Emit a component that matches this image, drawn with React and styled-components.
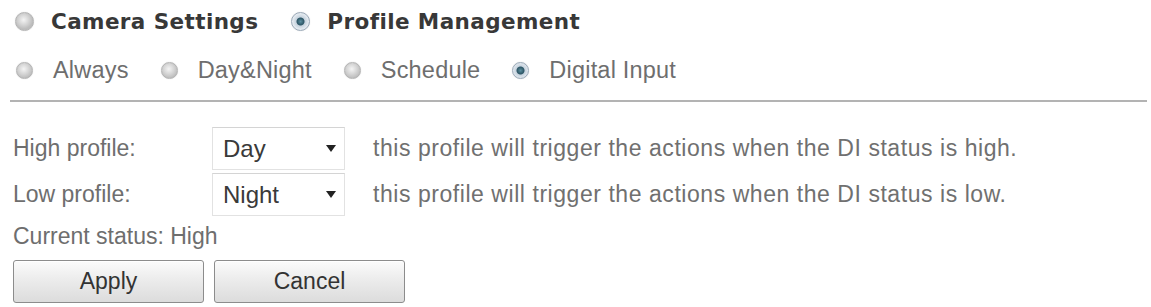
import React from 'react'
import { styled, createGlobalStyle } from 'styled-components'

const Global = createGlobalStyle`
  html, body {
    margin: 0;
    padding: 0;
    background: #ffffff;
  }
  body {
    font-family: "Liberation Sans", Arial, sans-serif;
  }
`

const Page = styled.div`
  width: 1151px;
  height: 307px;
  overflow: hidden;
  padding: 0 4px 0 12px;
  box-sizing: border-box;
`

const TabRow = styled.div`
  display: flex;
  align-items: center;
  height: 42px;
  padding-left: 3px;
`

const ModeRow = styled.div`
  display: flex;
  align-items: center;
  height: 44px;
  margin-top: 6px;
  padding-left: 4px;
`

const Option = styled.label`
  display: flex;
  align-items: center;
  gap: ${(p) => (p.$big ? '17px' : '20px')};
  margin-right: ${(p) => (p.$big ? '33px' : '32px')};
  font-family: ${(p) => (p.$big ? '"DejaVu Sans", Verdana, sans-serif' : '"Liberation Sans", Arial, sans-serif')};
  font-weight: ${(p) => (p.$big ? 'bold' : 'normal')};
  font-size: ${(p) => (p.$big ? '21.5px' : '23.5px')};
  letter-spacing: ${(p) => (p.$big ? '0.4px' : '0.2px')};
  color: ${(p) => (p.$big ? '#383838' : '#6e6e6e')};
`

const Radio = styled.span`
  width: ${(p) => (p.$big ? '19px' : '17px')};
  height: ${(p) => (p.$big ? '19px' : '17px')};
  border-radius: 50%;
  box-sizing: border-box;
  flex: none;
  border: 1px solid ${(p) => (p.$on ? '#9aa9b8' : '#b4b4b4')};
  background: ${(p) =>
    p.$on
      ? 'radial-gradient(circle at 50% 50%, #5c8fa0 0, #2d5666 3.5px, #c7d3de 4.5px, #eef2f6 9px)'
      : 'radial-gradient(circle at 45% 40%, #f4f4f4 0, #d6d6d6 5px, #bdbdbd 9px)'};
  box-shadow: 0 0 1px #c8c8c8;
`

const Divider = styled.div`
  height: 0;
  border-top: 2px solid #b3b3b3;
  margin: 8px 0 0 -2px;
`

const Form = styled.div`
  display: flex;
  flex-direction: column;
  padding-top: 25px;
  padding-left: 1px;
`

const FieldRow = styled.div`
  display: flex;
  align-items: center;
  height: 43px;
  margin-bottom: 3px;
`

const Label = styled.span`
  width: 199px;
  font-size: 23px;
  color: #6e6e6e;
  flex: none;
`

const Select = styled.div`
  width: 133px;
  height: 43px;
  box-sizing: border-box;
  border: 1px solid #e2e2e2;
  border-top-color: #d4d4d4;
  display: flex;
  align-items: center;
  justify-content: space-between;
  padding: 0 8px 0 10px;
  font-size: 24px;
  color: #3a3a3a;
  flex: none;
`

const Arrow = styled.span`
  width: 0;
  height: 0;
  border-left: 5.5px solid transparent;
  border-right: 5.5px solid transparent;
  border-top: 7px solid #222;
`

const Hint = styled.span`
  margin-left: 28px;
  font-size: 23px;
  letter-spacing: 0.55px;
  color: #707070;
  white-space: nowrap;
`

const Status = styled.div`
  font-size: 23px;
  color: #6e6e6e;
  height: 32px;
  display: flex;
  align-items: center;
  margin-top: 1px;
`

const Buttons = styled.div`
  display: flex;
  gap: 10px;
  margin-top: 8px;
`

const Button = styled.button`
  width: 191px;
  height: 43px;
  border: 1px solid #8c8c8c;
  border-radius: 3px;
  background: linear-gradient(#fbfbfb, #ececec 45%, #dcdcdc);
  box-shadow: inset 0 1px 0 #ffffff;
  font-family: "Liberation Sans", Arial, sans-serif;
  font-size: 23px;
  color: #333;
  padding: 0;
`

const App = () => {
  return (
    <>
      <Global />
      <Page>
        <TabRow>
          <Option $big>
            <Radio $big />
            Camera Settings
          </Option>
          <Option $big>
            <Radio $big $on />
            Profile Management
          </Option>
        </TabRow>

        <ModeRow>
          <Option>
            <Radio />
            Always
          </Option>
          <Option>
            <Radio />
            Day&amp;Night
          </Option>
          <Option>
            <Radio />
            Schedule
          </Option>
          <Option>
            <Radio $on />
            Digital Input
          </Option>
        </ModeRow>

        <Divider />

        <Form>
          <FieldRow>
            <Label>High profile:</Label>
            <Select>
              Day
              <Arrow />
            </Select>
            <Hint>this profile will trigger the actions when the DI status is high.</Hint>
          </FieldRow>
          <FieldRow>
            <Label>Low profile:</Label>
            <Select>
              Night
              <Arrow />
            </Select>
            <Hint>this profile will trigger the actions when the DI status is low.</Hint>
          </FieldRow>
          <Status>Current status: High</Status>
          <Buttons>
            <Button>Apply</Button>
            <Button>Cancel</Button>
          </Buttons>
        </Form>
      </Page>
    </>
  )
}

export default App
